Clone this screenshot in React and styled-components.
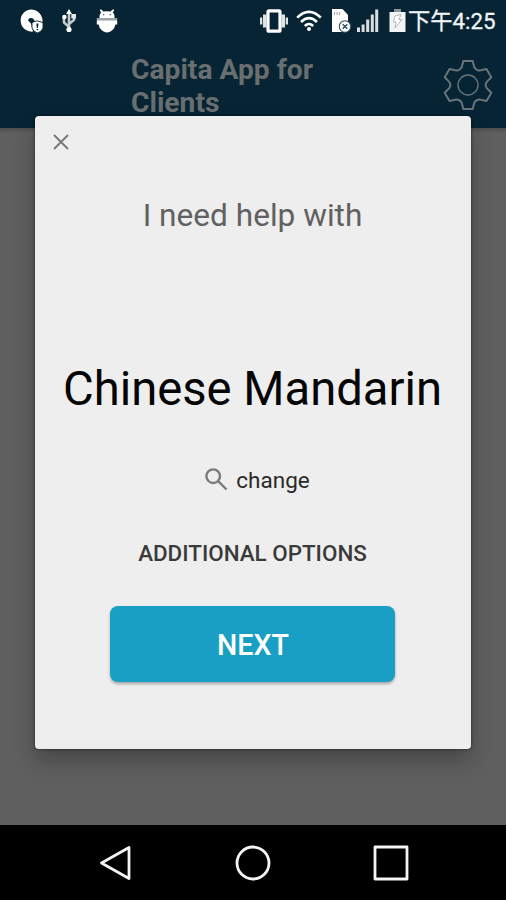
import React, { Component } from 'react';
import styled, { createGlobalStyle } from 'styled-components';

const navy = '#062433';
const blue = '#199fc4';
const panel = '#eeeeee';
const dimmed = '#5f5f5f';

export default class App extends Component {
	render() {
		return (
			<Screen>
				<GlobalStyle />
				<StatusBar>
					<StatusIcon width="24" height="24" left={19}>
						<path d="M11.5 0.5A11 11 0 1 0 14 22.6L12 14.5L9 11.5A3.2 3.2 0 0 1 14.5 10L16 12.5L23.5 13A11.5 11.5 0 0 0 11.5 0.5Z" fill="#fff" />
						<path d="M13 13.5L18 11.8L24 13.5V19Q22.5 23 18.4 24Q14 22.5 13 19Z" fill="#fff" stroke={navy} strokeWidth="0.9" />
						<path d="M17.4 14.5H19.4L19 19H17.8ZM17.6 20H19.2V21.3H17.6Z" fill={navy} />
					</StatusIcon>
					<StatusIcon width="14" height="24" left={19}>
						<path d="M7 3V22M7 18L2 13.5V8M7 15L12 11V7" fill="none" stroke="#c4c9cb" strokeWidth="2.6" />
						<path d="M7 0L10 5H4Z" fill="#fff" />
						<circle cx="2.4" cy="8" r="2.2" fill="#fff" />
						<path d="M9.3 5H14V9.5H9.3Z" fill="#e4e7e8" />
						<circle cx="7" cy="20.5" r="2.6" fill="#fff" />
					</StatusIcon>
					<StatusIcon width="22" height="24" left={20}>
						<path d="M3.5 9V7Q3.6 4.8 5.2 3.6L3.8 1.2L5 0.3L7.4 2.6Q11 1.8 14.6 2.6L17 0.3L18.2 1.2L16.8 3.6Q18.4 4.8 18.5 7V9Z" fill="#fff" />
						<path d="M0.8 9H21.2V11.2H0.8Z" fill="#9ba3a6" />
						<path d="M0.8 11.2H21.2V15.5H19.4Q18.8 19.5 16 21.5Q13.5 23.5 11 23.5Q8.5 23.5 6 21.5Q3.2 19.5 2.6 15.5H0.8Z" fill="#fff" />
						<path d="M7 5H8.3V6.2H7ZM13.7 5H15V6.2H13.7Z" fill="#47606c" />
					</StatusIcon>
					<Spacer />
					<StatusIcon width="28" height="24">
						<path d="M0 8.5H2.3V15.5H0ZM3 5.5H6.5V18.5H3ZM21.5 5.5H25V18.5H21.5ZM25.7 8.5H28V15.5H25.7Z" fill="#dfe3e5" />
						<rect x="8" y="1.8" width="12" height="20.4" rx="1" fill={navy} stroke="#fff" strokeWidth="3.2" />
					</StatusIcon>
					<StatusIcon width="26" height="24" left={8}>
						<path d="M1.2 8.6Q13 -3 24.8 8.6M5 13Q13 5.2 21 13M8.8 17Q13 13 17.2 17" fill="none" stroke="#fff" strokeWidth="2.6" />
						<circle cx="13" cy="20" r="2" fill="#fff" />
					</StatusIcon>
					<StatusIcon width="20" height="24" left={10}>
						<path d="M0 0H10.5L16 6V23H0Z" fill="#fff" />
						<path d="M2.5 3V6M5 3V6M7.5 3V6" stroke="#a9b1b5" strokeWidth="1.2" />
						<circle cx="13" cy="17.5" r="5.7" fill="#fff" stroke="#33505e" strokeWidth="1.1" />
						<path d="M10.7 15.2L15.3 19.8M15.3 15.2L10.7 19.8" stroke="#2b4653" strokeWidth="1.3" />
					</StatusIcon>
					<StatusIcon width="22" height="24" left={5}>
						<path d="M0 18.5H3V23H0ZM4.6 15.5H7.6V23H4.6ZM9.2 10.5H12.2V23H9.2ZM13.8 5.5H16.8V23H13.8ZM18.2 0.5H21.2V23H18.2Z" fill="#d9dedf" />
					</StatusIcon>
					<StatusIcon width="17" height="24" left={10}>
						<path d="M5 0H12V3H5Z" fill="#8c969a" />
						<path d="M0.5 3H16.5V23H0.5Z" fill="#f4f4f4" />
						<path d="M6 7L12 5.5L10 10.5H13L6 19L7 13H4.5Z" fill="#fff" stroke="#b3b8ba" strokeWidth="1" />
					</StatusIcon>
					<Clock>下午4:25</Clock>
				</StatusBar>
				<Header>
					<Title>Capita App for Clients</Title>
					<Gear width="52" height="52" viewBox="0 0 52 52">
						<path d="M21.3 2H30.7L32.3 8.2Q34.5 12 38.8 11.3L44.5 10L49.3 18.2L45 22.6Q42.3 26 45 29.4L49.3 33.8L44.5 42L38.8 40.7Q34.5 40 32.3 43.8L30.7 50H21.3L19.7 43.8Q17.5 40 13.2 40.7L7.5 42L2.7 33.8L7 29.4Q9.7 26 7 22.6L2.7 18.2L7.5 10L13.2 11.3Q17.5 12 19.7 8.2Z" />
						<circle cx="26" cy="26" r="10" />
					</Gear>
				</Header>
				<Backdrop />
				<NavBar>
					<NavIcon width="36" height="40">
						<path d="M4.5 20L32 4.5V35.5Z" />
					</NavIcon>
					<NavIcon width="36" height="40">
						<circle cx="18" cy="20" r="16" />
					</NavIcon>
					<NavIcon width="36" height="40">
						<rect x="2" y="4" width="32" height="32" />
					</NavIcon>
				</NavBar>
				<Dialog>
					<Close width="16" height="16">
						<path d="M1 1L15 15M15 1L1 15" />
					</Close>
					<Heading>I need help with</Heading>
					<Language>Chinese Mandarin</Language>
					<Change>
						<Search width="24" height="24">
							<circle cx="9.2" cy="8.2" r="6.8" />
							<path d="M14.2 13.2L22.5 21.5" />
						</Search>
						change
					</Change>
					<Options>ADDITIONAL OPTIONS</Options>
					<Next>NEXT</Next>
				</Dialog>
			</Screen>
		);
	}
}

const GlobalStyle = createGlobalStyle`
	body {
		margin: 0;
		background: #000;
	}
`;

const Screen = styled.div`
	position: relative;
	display: flex;
	flex-direction: column;
	width: 506px;
	height: 900px;
	overflow: hidden;
	font-family: Roboto, "Noto Sans CJK TC", sans-serif;
`;

const StatusBar = styled.div`
	display: flex;
	align-items: center;
	box-sizing: border-box;
	height: 41px;
	padding-right: 11px;
	background: ${navy};
`;

const StatusIcon = styled.svg`
	flex: none;
	margin-left: ${props => props.left || 0}px;
	overflow: visible;
`;

const Spacer = styled.div`
	flex: 1;
`;

const Clock = styled.span`
	width: 87px;
	margin-left: 2px;
	color: #f2f4f5;
	font-size: 22.3px;
	line-height: 40px;
	white-space: nowrap;
	-webkit-text-stroke: 0.3px #f2f4f5;
`;

const Header = styled.div`
	display: flex;
	justify-content: space-between;
	box-sizing: border-box;
	height: 87px;
	padding: 12px 12px 0 131px;
	background: ${navy};
`;

const Title = styled.h1`
	width: 230px;
	margin: 0;
	color: #696e70;
	font-size: 28.2px;
	font-weight: 700;
	line-height: 33px;
`;

const Gear = styled.svg`
	margin-top: 6px;
	fill: none;
	stroke: #68747a;
	stroke-width: 2;
	stroke-linejoin: round;

	circle {
		stroke-width: 1.4;
	}
`;

const Backdrop = styled.div`
	flex: 1;
	background: linear-gradient(#4b4e50, ${dimmed} 5px);
`;

const NavBar = styled.div`
	display: flex;
	align-items: center;
	justify-content: space-between;
	box-sizing: border-box;
	height: 75px;
	padding: 1px 97px 0;
	background: #000;
`;

const NavIcon = styled.svg`
	fill: none;
	stroke: #f4f4f4;
	stroke-width: 2.8;
	stroke-linejoin: round;
`;

const Dialog = styled.div`
	position: absolute;
	top: 116px;
	left: 35px;
	display: flex;
	flex-direction: column;
	align-items: center;
	box-sizing: border-box;
	width: 436px;
	height: 633px;
	padding: 18px 1px 0 0;
	border-radius: 4px;
	background: ${panel};
	box-shadow: 0 0 3px rgba(0, 0, 0, 0.6), 0 12px 22px rgba(0, 0, 0, 0.26);
`;

const Close = styled.svg`
	align-self: flex-start;
	margin-left: 17.5px;
	stroke: #777;
	stroke-width: 1.9;
`;

const Heading = styled.h2`
	margin: 46px 0 0;
	color: #616161;
	font-size: 31.6px;
	font-weight: 400;
	line-height: 40px;
`;

const Language = styled.div`
	margin-top: 123px;
	color: #050505;
	font-size: 47.2px;
	line-height: 60px;
	white-space: nowrap;
`;

const Change = styled.div`
	display: flex;
	align-items: center;
	margin-top: 46px;
	margin-left: 9px;
	color: #2a2a2a;
	font-size: 22.5px;
	line-height: 30px;
`;

const Search = styled.svg`
	margin-right: 8px;
	fill: none;
	stroke: #7b7b7b;
	stroke-width: 2.4;
`;

const Options = styled.div`
	margin-top: 43px;
	color: #3a3a3a;
	font-size: 22.4px;
	font-weight: 500;
	line-height: 30px;
`;

const Next = styled.button`
	width: 285px;
	height: 76px;
	margin-top: 38px;
	padding: 2px 0 0 1px;
	border: 0;
	border-radius: 8px;
	background: ${blue};
	box-shadow: 0 2px 3px rgba(0, 0, 0, 0.3);
	color: #fff;
	font-family: inherit;
	font-size: 28.6px;
	font-weight: 500;
`;
